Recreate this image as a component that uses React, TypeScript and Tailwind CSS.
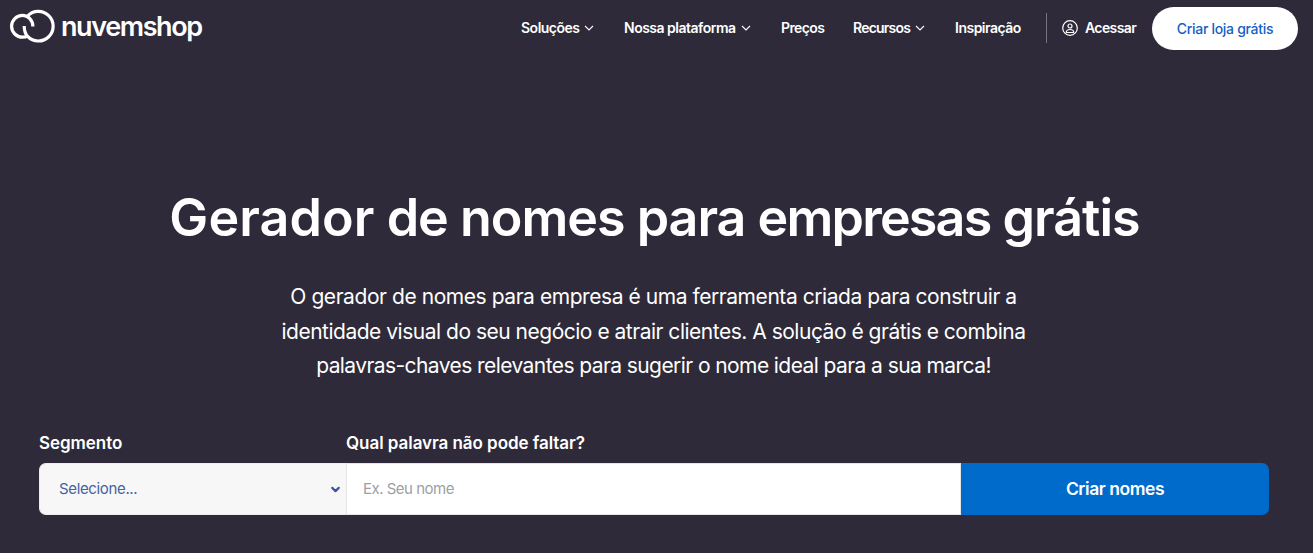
import { ChevronDown } from 'lucide-react'

const NAV = [
  { label: 'Soluções', menu: true, style: 'w-[58px] tracking-[-0.5px]' },
  { label: 'Nossa plataforma', menu: true, style: 'w-[112px] tracking-[-0.5px]' },
  { label: 'Preços', menu: false, style: 'w-[42px] tracking-[-0.6px]' },
  { label: 'Recursos', menu: true, style: 'w-[57px] tracking-[-0.8px]' },
  { label: 'Inspiração', menu: false, style: 'w-[66px] tracking-[-0.5px]' },
]

function Chevron() {
  return (
    <svg width="10" height="6" viewBox="0 0 10 6" fill="none" stroke="currentColor" strokeWidth="1.1" className="ml-[5px] mt-px shrink-0">
      <path d="M1 1l4 4 4-4" />
    </svg>
  )
}

function Logo() {
  return (
    <a href="#" className="flex items-center">
      <svg width="46" height="35" viewBox="0 0 46 35" fill="none" stroke="white" strokeWidth="3.2">
        <path d="M23.9 17.6C23.9 11 19.2 6.4 13.5 6.4A10.9 10.9 0 0 0 13.5 28.2C15.6 28.2 17.4 27.8 19 26.8" />
        <path d="M15.2 17C15.2 21.5 16.4 25 18.6 27.4A14.8 14.8 0 1 0 18.6 7" />
      </svg>
      <span className="ml-[6px] w-[142px] whitespace-nowrap text-[27px] font-semibold leading-[35px] tracking-[-1.4px]">nuvemshop</span>
    </a>
  )
}

function UserIcon() {
  return (
    <svg width="16" height="16" viewBox="0 0 16 16" fill="none" stroke="currentColor" strokeWidth="1.2">
      <circle cx="8" cy="8" r="7.3" />
      <circle cx="8" cy="6" r="2" />
      <path d="M4.3 12.5c0-4 7.4-4 7.4 0z" />
    </svg>
  )
}

export default function App() {
  return (
    <div className="h-[553px] w-[1313px] overflow-hidden bg-[#2e2a39] font-['Inter',sans-serif] text-white">
      <header className="flex h-[56px] pl-[9px] pr-[15px]">
        <div className="pt-[9px]">
          <Logo />
        </div>
        <nav className="ml-auto flex h-[54px] items-center gap-[30px] text-[14px] font-semibold">
          {NAV.map(item => (
            <a key={item.label} href="#" className="flex items-center">
              <span className={`${item.style} whitespace-nowrap`}>{item.label}</span>
              {item.menu && <Chevron />}
            </a>
          ))}
        </nav>
        <div className="ml-[25px] mt-[13px] h-[30px] w-px bg-[#77747f]" />
        <a href="#" className="ml-[15px] flex h-[56px] items-center text-[14px] font-semibold tracking-[-0.6px]">
          <UserIcon />
          <span className="mb-px ml-[7px] w-[51px] whitespace-nowrap">Acessar</span>
        </a>
        <a href="#" className="ml-[16px] mt-[7px] flex h-[43px] w-[146px] items-center justify-center rounded-full bg-white pb-px text-[14px] font-medium tracking-[-0.3px] text-[#1361c4]">
          Criar loja grátis
        </a>
      </header>

      <main className="px-[39px] pt-[126px]">
        <h1 className="-ml-px mr-[3px] whitespace-nowrap text-center text-[52px] font-semibold leading-[72px] tracking-[-1px]">
          <span className="tracking-[0.1px]">Gerador</span> de nomes para <span className="tracking-[-1.8px]">empresas</span> grátis
        </h1>
        <p className="mt-[26px] pr-[6px] text-center text-[21px] leading-[34.5px]">
          <span className="block tracking-[-0.44px]">O gerador de nomes para empresa é uma ferramenta criada para construir a</span>
          <span className="block tracking-[-0.49px]">identidade visual do seu negócio e atrair clientes. A solução é grátis e combina</span>
          <span className="block tracking-[-0.58px]">palavras-chaves relevantes para sugerir o nome ideal para a sua marca!</span>
        </p>

        <form className="mt-[47px] grid w-[1230px] grid-cols-[307px_615px_308px]">
          <label className="h-[32px] text-[17px] font-semibold leading-[25px] tracking-[-0.05px]">Segmento</label>
          <label className="h-[32px] text-[17px] font-semibold leading-[25px] tracking-[-0.05px]">Qual palavra não pode faltar?</label>
          <span />
          <button type="button" className="flex h-[52px] items-center justify-between rounded-l-[7px] border-y border-l border-[#eceded] bg-[#f7f7f7] pl-[19px] pr-[4px] pt-px text-[15px] tracking-[-0.35px] text-[#4562a3]">
            Selecione...
            <ChevronDown className="size-[13px] text-[#3f54a0]" strokeWidth={4} />
          </button>
          <input
            placeholder="Ex. Seu nome"
            className="h-[52px] border border-[#e3e5e7] bg-white px-[16px] text-[15px] tracking-[-0.5px] placeholder:text-[#9b9fa5]"
          />
          <button type="button" className="h-[52px] rounded-r-[7px] bg-[#006bca] pt-[2px] text-[17.5px] font-semibold tracking-[-0.45px]">
            Criar nomes
          </button>
        </form>
      </main>
    </div>
  )
}
